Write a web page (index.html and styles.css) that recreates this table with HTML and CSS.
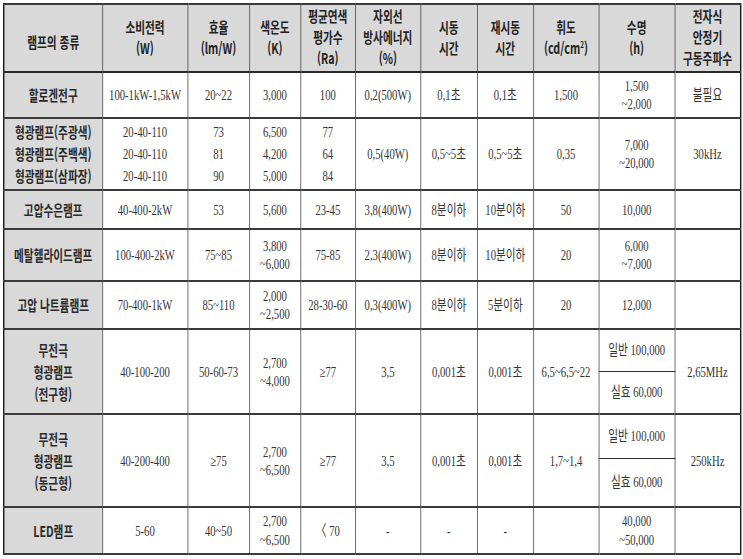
FILE: index.html
```html
<!DOCTYPE html>
<html lang="ko">
<head>
<meta charset="utf-8">
<title>램프의 종류</title>
<link rel="stylesheet" href="styles.css">
</head>
<body>
<div class="page">
  <div class="sheet">
    <table class="lamps">
      <colgroup>
        <col class="w1"><col class="w2"><col class="w3"><col class="w4"><col class="w5"><col class="w6">
        <col class="w7"><col class="w8"><col class="w9"><col class="w10"><col class="w11">
      </colgroup>
      <thead>
        <tr class="h-head">
          <th class="first-head">램프의 종류</th>
          <th>소비전력<br>(W)</th>
          <th>효율<br>(lm/W)</th>
          <th>색온도<br>(K)</th>
          <th>평균연색<br>평가수<br>(Ra)</th>
          <th>자외선<br>방사에너지<br>(%)</th>
          <th>시동<br>시간</th>
          <th>재시동<br>시간</th>
          <th>휘도<br>(cd/cm<sup>2</sup>)</th>
          <th>수명<br>(h)</th>
          <th>전자식<br>안정기<br>구동주파수</th>
        </tr>
      </thead>
      <tbody>
        <tr class="h1">
          <th>할로겐전구</th>
          <td>100-1kW-1,5kW</td>
          <td>20~22</td>
          <td>3,000</td>
          <td>100</td>
          <td>0,2(500W)</td>
          <td>0,1초</td>
          <td>0,1초</td>
          <td>1,500</td>
          <td>1,500<br>~2,000</td>
          <td>불필요</td>
        </tr>
        <tr class="h2 tri">
          <th>형광램프(주광색)<br>형광램프(주백색)<br>형광램프(삼파장)</th>
          <td>20-40-110<br>20-40-110<br>20-40-110</td>
          <td>73<br>81<br>90</td>
          <td>6,500<br>4,200<br>5,000</td>
          <td>77<br>64<br>84</td>
          <td>0,5(40W)</td>
          <td>0,5~5초</td>
          <td>0,5~5초</td>
          <td>0,35</td>
          <td class="two">7,000<br>~20,000</td>
          <td>30kHz</td>
        </tr>
        <tr class="h3">
          <th>고압수은램프</th>
          <td>40-400-2kW</td>
          <td>53</td>
          <td>5,600</td>
          <td>23-45</td>
          <td>3,8(400W)</td>
          <td>8분이하</td>
          <td>10분이하</td>
          <td>50</td>
          <td>10,000</td>
          <td></td>
        </tr>
        <tr class="h4">
          <th>메탈헬라이드램프</th>
          <td>100-400-2kW</td>
          <td>75~85</td>
          <td>3,800<br>~6,000</td>
          <td>75-85</td>
          <td>2,3(400W)</td>
          <td>8분이하</td>
          <td>10분이하</td>
          <td>20</td>
          <td>6,000<br>~7,000</td>
          <td></td>
        </tr>
        <tr class="h5">
          <th>고압 나트륨램프</th>
          <td>70-400-1kW</td>
          <td>85~110</td>
          <td>2,000<br>~2,500</td>
          <td>28-30-60</td>
          <td>0,3(400W)</td>
          <td>8분이하</td>
          <td>5분이하</td>
          <td>20</td>
          <td>12,000</td>
          <td></td>
        </tr>
        <tr class="h6a">
          <th rowspan="2" class="multi">무전극<br>형광램프<br>(전구형)</th>
          <td rowspan="2">40-100-200</td>
          <td rowspan="2">50-60-73</td>
          <td rowspan="2">2,700<br>~4,000</td>
          <td rowspan="2">≥77</td>
          <td rowspan="2">3,5</td>
          <td rowspan="2">0,001초</td>
          <td rowspan="2">0,001초</td>
          <td rowspan="2">6,5~6,5~22</td>
          <td class="sub">일반 100,000</td>
          <td rowspan="2">2,65MHz</td>
        </tr>
        <tr class="h6b">
          <td class="sub">실효 60,000</td>
        </tr>
        <tr class="h7a">
          <th rowspan="2" class="multi">무전극<br>형광램프<br>(동근형)</th>
          <td rowspan="2">40-200-400</td>
          <td rowspan="2">≥75</td>
          <td rowspan="2">2,700<br>~6,500</td>
          <td rowspan="2">≥77</td>
          <td rowspan="2">3,5</td>
          <td rowspan="2">0,001초</td>
          <td rowspan="2">0,001초</td>
          <td rowspan="2">1,7~1,4</td>
          <td class="sub">일반 100,000</td>
          <td rowspan="2">250kHz</td>
        </tr>
        <tr class="h7b">
          <td class="sub">실효 60,000</td>
        </tr>
        <tr class="h8">
          <th>LED램프</th>
          <td>5-60</td>
          <td>40~50</td>
          <td class="wide">2,700<br>~6,500</td>
          <td>〈 70</td>
          <td>-</td>
          <td>-</td>
          <td>-</td>
          <td></td>
          <td class="wide">40,000<br>~50,000</td>
          <td></td>
        </tr>
      </tbody>
    </table>
  </div>
</div>
</body>
</html>
```

FILE: styles.css
```css
html, body {
  margin: 0;
  padding: 0;
  background: #ffffff;
  overflow: hidden;
}

.page {
  padding: 3px 0 0 3px;
  width: 743px;
  height: 559px;
  box-sizing: border-box;
}

.sheet {
  width: 1038px;
  transform: scaleX(0.71);
  transform-origin: 0 0;
}

.lamps {
  width: 1038px;
  table-layout: fixed;
  border-collapse: collapse;
  border: 2px solid #1a1a1a;
  font-family: "Liberation Serif", "Noto Sans CJK KR", serif;
  font-size: 15px;
  color: #333333;
}

.w1 { width: 139px; }
.w2 { width: 120px; }
.w3 { width: 87px; }
.w4 { width: 72px; }
.w5 { width: 77px; }
.w6 { width: 92px; }
.w7 { width: 80px; }
.w8 { width: 79px; }
.w9 { width: 92px; }
.w10 { width: 107px; }
.w11 { width: 93px; }

.lamps th,
.lamps td {
  padding: 0;
  text-align: center;
  vertical-align: middle;
  border-top: 2px solid #3a3a3a;
  border-bottom: 2px solid #3a3a3a;
  border-left: 1px solid #333333;
  border-right: 1px solid #333333;
  line-height: 18px;
  white-space: nowrap;
}

.lamps th {
  font-family: "Noto Sans CJK KR", "Liberation Sans", sans-serif;
  font-weight: 700;
  font-size: 15px;
  color: #2a2a2a;
  background: #d9d9d9;
}

.lamps thead th {
  color: #222222;
  line-height: 21px;
  padding-bottom: 3px;
  border-bottom: 2px solid #2a2a2a;
}

.lamps thead th.first-head {
  padding-bottom: 0;
  padding-top: 7px;
}

.lamps sup {
  font-size: 9px;
  line-height: 0;
  vertical-align: 6px;
}

.lamps tbody th.multi {
  line-height: 22px;
}

.tri td,
.tri th {
  line-height: 22px;
}

.tri td.two {
  line-height: 18px;
}

.lamps td.wide {
  line-height: 19px;
}

.lamps td.sub {
  border-bottom: 1px solid #333333;
}

.h6b td.sub,
.h7b td.sub {
  border-top: 1px solid #333333;
  border-bottom: 2px solid #3a3a3a;
}

.h-head { height: 68px; }
.h1 { height: 46px; }
.h2 { height: 72px; }
.h3 { height: 39px; }
.h4 { height: 52px; }
.h5 { height: 48px; }
.h6a { height: 42px; }
.h6b { height: 43px; }
.h7a { height: 44px; }
.h7b { height: 49px; }
.h8 { height: 47px; }
```
